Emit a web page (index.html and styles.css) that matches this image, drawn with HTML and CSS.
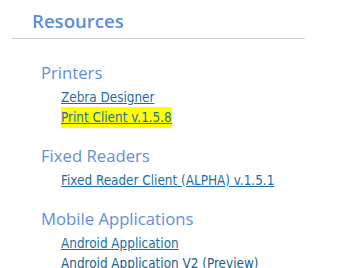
FILE: index.html
```html
<!DOCTYPE html>
<html lang="en">
<head>
    <meta charset="UTF-8">
    <title>Resources</title>
    <link rel="stylesheet" href="styles.css">
</head>
<body>
    <div class="resources">
        <h2 class="title">Resources</h2>

        <div class="group">
            <h3>Printers</h3>
            <ul>
                <li><a href="#">Zebra Designer</a></li>
                <li><a href="#" class="mark">Print Client v.1.5.8</a></li>
            </ul>
        </div>

        <div class="group">
            <h3>Fixed Readers</h3>
            <ul>
                <li><a href="#">Fixed Reader Client (ALPHA) v.1.5.1</a></li>
            </ul>
        </div>

        <div class="group">
            <h3>Mobile Applications</h3>
            <ul>
                <li><a href="#">Android Application</a></li>
                <li><a href="#" class="plain">Android Application V2 (Preview)</a></li>
            </ul>
        </div>
    </div>
</body>
</html>
```

FILE: styles.css
```css
body {
    margin : 0;
    font-family : "DejaVu Sans Condensed", "DejaVu Sans", sans-serif;
}

.resources {
    width : 293px;
    margin-left : 12px;
}

.title {
    margin : 0;
    padding : 8px 0 5px 20px;
    font-family : "Open Sans", sans-serif;
    font-size : 18.6px;
    font-weight : 600;
    color : #5b8ddb;
    border-bottom : 1px solid #cfcfcf;
}

.group {
    padding-left : 29px;
    margin-top : 23px;
}

.group + .group {
    margin-top : 17px;
}

h3 {
    margin : 0;
    font-family : "Open Sans", sans-serif;
    font-size : 16.7px;
    font-weight : 400;
    color : #5f8fdc;
    line-height : 22px;
}

ul {
    list-style : none;
    margin : 4px 0 0;
    padding-left : 20px;
    font-size : 13.4px;
    line-height : 20px;
}

a {
    color : #1b6ea6;
}

.mark {
    background : #ffff00;
    padding : 3px 0;
}

.plain {
    text-decoration : none;
    color : #1d5f8e;
}
```
